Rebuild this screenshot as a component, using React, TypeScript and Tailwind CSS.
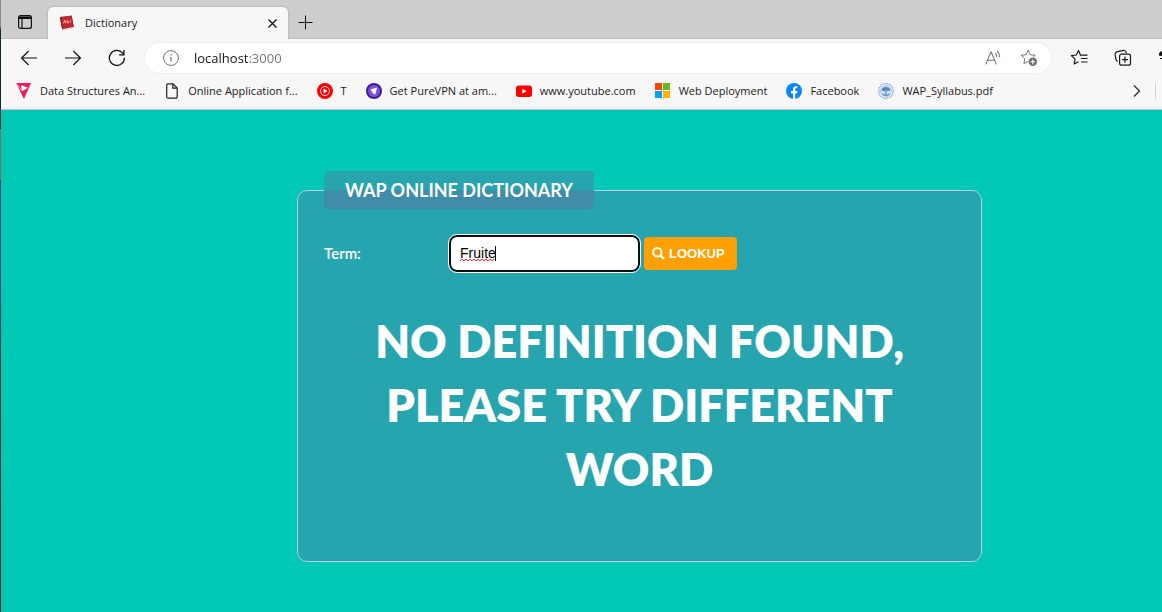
import { useState, type ReactNode } from "react";

function TabActionsIcon() {
  return (
    <svg width="16" height="16" viewBox="0 0 16 16" fill="none" stroke="#111" strokeWidth="1.2">
      <rect x="1.6" y="1.6" width="12.8" height="12.8" rx="2" />
      <path d="M2 3.2h12M2 4.2h12" strokeWidth="1.6" />
      <path d="M5 4v10" />
    </svg>
  );
}

function BookIcon() {
  return (
    <svg width="16" height="16" viewBox="0 0 16 16">
      <path d="M1 2.2 12.6 0.8 15 12.6 3.6 15.2Z" fill="#8d1519" />
      <path d="M3.4 14 14.6 11.8l.3 1.2L4 15.4Z" fill="#e3d5d0" />
      <path d="M1 2 12.6.6l2 11L3 13.6Z" fill="#c1272d" />
      <path d="m1 2 1.4-.2 2 11.6-1.4.2Z" fill="#9d1b20" />
      <path d="m4.4 8.6 1.2-3.6 1.6 3.2M5 7.3l1.6-.3M8 4.6l.5 3.5c1.6 0 1.5-2 0-1.6M12 5.6c-1.6-.2-1.6 2 0 1.6" stroke="#f0b9b5" strokeWidth=".8" fill="none" />
    </svg>
  );
}

function ArrowIcon({ forward = false }: { forward?: boolean }) {
  return (
    <svg width="18" height="16" viewBox="0 0 18 16" fill="none" stroke="#111" strokeWidth="1.2">
      {forward ? <path d="M1 8h15.4M9.4 1l7 7-7 7" /> : <path d="M17 8H1.6M8.6 1l-7 7 7 7" />}
    </svg>
  );
}

function ReloadIcon() {
  return (
    <svg width="18" height="18" viewBox="0 0 18 18" fill="none" stroke="#111" strokeWidth="1.3">
      <path d="M16.4 8.7A7.5 7.5 0 1 1 14.7 4.2L15.8 5.6" />
      <path d="M15.9 1v4.8h-4.8" />
    </svg>
  );
}

function InfoIcon() {
  return (
    <svg width="16" height="16" viewBox="0 0 16 16" fill="none" stroke="#707070">
      <circle cx="8" cy="8" r="7.4" />
      <path d="M8 7v4.6" strokeWidth="1.2" />
      <path d="M8 4.2v1.4" strokeWidth="1.4" />
    </svg>
  );
}

function ReadAloudIcon() {
  return (
    <svg width="17" height="16" viewBox="0 0 17 16" fill="none" stroke="#757575" strokeWidth="1.1">
      <path d="M.8 14.4 5.9 2h.4l5 12.4M2.6 10.2h7" />
      <path d="M10.3 3.2c1 1 1.4 2.2 1.4 3.7M12 1c1.9 1.6 2.7 3.5 2.7 5.9" />
    </svg>
  );
}

const star = "M8.2 1.2 10.3 5.7 15.2 6.3 11.6 9.7 12.5 14.6 8.2 12.2 3.9 14.6 4.8 9.7 1.2 6.3 6.1 5.7Z";

function AddFavoriteIcon() {
  return (
    <svg width="18" height="18" viewBox="0 0 18 18" fill="none">
      <path d={star} stroke="#757575" strokeLinejoin="round" />
      <circle cx="12.8" cy="12.8" r="5" fill="#fff" />
      <circle cx="12.8" cy="12.8" r="4.2" fill="#6d6d6d" />
      <path d="M12.8 10.4v4.8M10.4 12.8h4.8" stroke="#fff" strokeWidth="1.1" />
    </svg>
  );
}

function FavoritesIcon() {
  return (
    <svg width="18" height="18" viewBox="0 0 18 18" fill="none" stroke="#1b1b1b" strokeWidth="1.2">
      <path d="M17.5 6.2H10.5L8.5 1.5 6.3 6 1.5 6.7l3.6 3.4L4.2 15 8.5 12.7M11 9.5h6.5M11 13h6.5" strokeLinejoin="round" />
    </svg>
  );
}

function CollectionsIcon() {
  return (
    <svg width="18" height="18" viewBox="0 0 18 18" fill="none" stroke="#1b1b1b" strokeWidth="1.2">
      <path d="M3.8 12.5C2.6 12.2 2.2 11.5 2 10.6L1.1 5.4C.9 4 1.5 3.3 2.7 2.9L9.5 1.3c1.2-.2 2 .3 2.4 1.4l.4 1.5" />
      <rect x="5.6" y="5.2" width="10.9" height="11" rx="2" fill="#f7f7f7" />
      <path d="M11 7.6v6.2M7.9 10.7h6.2" />
    </svg>
  );
}

function VIcon() {
  return (
    <svg width="16" height="18" viewBox="0 0 16 18">
      <path d="M0 1h15L8 17Z" fill="#f5175c" />
      <path d="M5 3 12 5.8 6 9.2Z" fill="#fff" />
      <path d="M.5 1.5 6 9" stroke="#fff" strokeWidth=".7" />
    </svg>
  );
}

function PageIcon() {
  return (
    <svg width="16" height="16" viewBox="0 0 16 16" fill="none" stroke="#222" strokeWidth="1.2">
      <path d="M4.2.8h4.8l4.2 4.2v8.7a1.5 1.5 0 0 1-1.5 1.5H4.2a1.5 1.5 0 0 1-1.5-1.5V2.3A1.5 1.5 0 0 1 4.2.8ZM8.8 1v4.2H13" />
    </svg>
  );
}

function MusicIcon() {
  return (
    <svg width="16" height="16" viewBox="0 0 16 16">
      <circle cx="8" cy="8" r="8" fill="#f00" />
      <circle cx="8" cy="8" r="4.5" fill="none" stroke="#fff" strokeWidth=".9" />
      <path d="m6.5 5.5 4 2.5-4 2.5Z" fill="#fff" />
    </svg>
  );
}

function VpnIcon() {
  return (
    <svg width="16" height="16" viewBox="0 0 16 16">
      <circle cx="8" cy="8" r="8" fill="#3f1c95" />
      <circle cx="8" cy="8" r="6" fill="#7c4fe0" />
      <path d="M4.5 6.4 11.2 4.4 9.2 11.6 7.2 10.4Z" fill="#fff" />
    </svg>
  );
}

function YoutubeIcon() {
  return (
    <svg width="16" height="16" viewBox="0 0 16 16">
      <rect y="2.5" width="16" height="11.4" rx="2.6" fill="#f00" />
      <path d="m6.4 5.8 4.2 2.4-4.2 2.4Z" fill="#fff" />
    </svg>
  );
}

function WindowsIcon() {
  return (
    <svg width="16" height="16" viewBox="0 0 16 16">
      <path d="M0 0h7v7H0z" fill="#ff4409" />
      <path d="M8 0h7v7H8z" fill="#6ab820" />
      <path d="M0 8h7v7H0z" fill="#00a3f4" />
      <path d="M8 8h7v7H8z" fill="#ffb400" />
    </svg>
  );
}

function FacebookIcon() {
  return (
    <svg width="16" height="16" viewBox="0 0 16 16">
      <circle cx="8" cy="8" r="8" fill="#0b86f4" />
      <path d="M7 16V10.4H5V8h2V6.3c0-2 1.2-3.1 3-3.1.7 0 1.3.1 1.3.1v2h-.9c-1 0-1.2.6-1.2 1.2V8h2.2l-.4 2.4H9.2V16Z" fill="#fff" />
    </svg>
  );
}

function SealIcon() {
  return (
    <svg width="16" height="16" viewBox="0 0 16 16" fill="none">
      <circle cx="8" cy="8" r="7.3" stroke="#7fa9d6" strokeWidth="1.3" strokeDasharray="1.5 .8" />
      <circle cx="8" cy="8" r="5.4" fill="#cfe0f1" stroke="#8db3da" strokeWidth=".7" />
      <path d="M3.5 7C4.5 3 11.5 3 12.5 7L10 8 8 7 6 8.5Z" fill="#4f86c2" />
      <path d="M8 7v4.5M4.5 11c2 1.5 5 1.5 7 0" stroke="#4f86c2" strokeWidth="1.2" />
    </svg>
  );
}

const bookmarks: { label: string; icon: ReactNode }[] = [
  { label: "Data Structures An...", icon: <VIcon /> },
  { label: "Online Application f...", icon: <PageIcon /> },
  { label: "T", icon: <MusicIcon /> },
  { label: "Get PureVPN at am...", icon: <VpnIcon /> },
  { label: "www.youtube.com", icon: <YoutubeIcon /> },
  { label: "Web Deployment", icon: <WindowsIcon /> },
  { label: "Facebook", icon: <FacebookIcon /> },
  { label: "WAP_Syllabus.pdf", icon: <SealIcon /> },
];

function TabStrip() {
  return (
    <div className="flex h-[39px] items-end border-b border-[#bdbdbd] bg-[#cdcdcd] text-[11px]">
      <button aria-label="Tab actions" className="ml-4 mr-[15px] flex h-8 items-center">
        <TabActionsIcon />
      </button>
      <div className="-mb-px flex h-8 w-60 items-center rounded-t-[5px] bg-[#f7f7f7] pl-[11px] pr-2 shadow-[0_0_2px_rgba(0,0,0,0.3)] [clip-path:inset(-3px_-3px_0_-3px)]">
        <BookIcon />
        <span className="ml-[10px] flex-1">Dictionary</span>
        <button aria-label="Close tab" className="flex h-4 w-4 items-center justify-center">
          <svg width="9" height="9" viewBox="0 0 9 9" stroke="#111" strokeWidth="1.3">
            <path d="m.5.5 8 8M8.5.5l-8 8" />
          </svg>
        </button>
      </div>
      <button aria-label="New tab" className="ml-[10px] flex h-8 items-center">
        <svg width="15" height="15" viewBox="0 0 15 15" stroke="#111">
          <path d="M7.5.5v14M.5 7.5h14" />
        </svg>
      </button>
    </div>
  );
}

function Toolbar() {
  const [url, setUrl] = useState("localhost:3000");
  return (
    <div className="flex h-[38px] items-center">
      <div className="ml-[19px] flex shrink-0 items-center gap-[26px]">
        <button aria-label="Back"><ArrowIcon /></button>
        <button aria-label="Forward"><ArrowIcon forward /></button>
        <button aria-label="Reload"><ReloadIcon /></button>
      </div>
      <div className="ml-[19px] flex h-[30px] flex-1 items-center rounded-full bg-white pl-[18px] pr-[13px] shadow-[0_0_3px_rgba(0,0,0,0.08)]">
        <InfoIcon />
        <input
          aria-label="Address"
          value={url}
          onChange={(e) => setUrl(e.target.value)}
          className="ml-[15px] h-5 min-w-0 flex-1 bg-[linear-gradient(90deg,#111_54px,#737373_54px)] bg-clip-text text-[13px] text-transparent caret-black outline-none"
        />
        <div className="flex gap-[18px]">
          <button aria-label="Read aloud"><ReadAloudIcon /></button>
          <button aria-label="Add to favorites"><AddFavoriteIcon /></button>
        </div>
      </div>
      <div className="ml-[19px] flex shrink-0 items-center">
        <button aria-label="Favorites"><FavoritesIcon /></button>
        <button aria-label="Collections" className="ml-[26px]"><CollectionsIcon /></button>
        <button aria-label="Profile" className="ml-[26px] w-1 overflow-hidden">
          <svg width="4" height="18" viewBox="0 0 4 18">
            <path d="M4 2C1.5 3 .8 4 .8 6.5L4 7Z" fill="#111" />
            <path d="M2 9.5h2" stroke="#111" />
          </svg>
        </button>
      </div>
    </div>
  );
}

function BookmarksBar() {
  return (
    <nav aria-label="Bookmarks" className="flex h-[33px] items-center border-b border-[#c4c4c4] pb-1 pl-[15px] text-[11px]">
      <div className="flex flex-1 gap-[19px]">
        {bookmarks.map((b) => (
          <a key={b.label} href="#" className="flex items-center gap-2 whitespace-nowrap">
            {b.icon}
            {b.label}
          </a>
        ))}
      </div>
      <button aria-label="More bookmarks" className="mr-[14px]">
        <svg width="8" height="12" viewBox="0 0 8 12" fill="none" stroke="#333" strokeWidth="1.4">
          <path d="m1 .5 5.5 5.5L1 11.5" />
        </svg>
      </button>
      <span className="mr-[6px] h-4 w-px bg-[#cfcfcf]" />
    </nav>
  );
}

function DictionaryForm() {
  const [term, setTerm] = useState("Fruite");
  return (
    <form onSubmit={(e) => e.preventDefault()} className="mx-auto w-full max-w-[685px] font-['Lato',sans-serif] text-white">
      <fieldset className="rounded-[10px] border border-[#b5cdea] bg-[#7a58a3]/31 px-[26px] pb-[60px]">
        <legend className="rounded-[5px] bg-[#7a58a3]/31 px-[21px] text-lg/[38px] font-bold uppercase">
          WAP Online Dictionary
        </legend>
        <div className="mt-[26px] flex items-center">
          <label htmlFor="term" className="w-[125px] text-[15px] font-semibold">Term:</label>
          <div className="relative">
            <input
              id="term"
              value={term}
              onChange={(e) => setTerm(e.target.value)}
              className="block h-[37px] w-[191px] rounded-[8px] border-2 border-[#101010] bg-white px-[9px] pb-[2px] font-['Liberation_Sans',sans-serif] text-sm text-black outline-1 outline-white"
            />
            <svg className="pointer-events-none absolute left-[11px] top-[9px]" width="36" height="18" viewBox="0 0 36 18" fill="none">
              <path d="M0 17l2-2 2 2 2-2 2 2 2-2 2 2 2-2 2 2 2-2 2 2 2-2 2 2 2-2 2 2 2-2 2 2 2-2" stroke="#f33" />
              <path d="M35.5 2v15" stroke="#000" />
            </svg>
          </div>
          <button type="submit" className="ml-1 flex h-[33px] items-center gap-1 rounded bg-[#ffa000] pl-2 pr-3 font-['Liberation_Sans',sans-serif] text-[13px] font-bold uppercase">
            <svg width="13" height="13" viewBox="0 0 13 13" fill="none" stroke="#fff">
              <circle cx="5.3" cy="5.3" r="4.2" strokeWidth="2" />
              <path d="m8.4 8.4 3.6 3.6" strokeWidth="2.4" />
            </svg>
            Lookup
          </button>
        </div>
        <h1 className="mt-[37px] px-10 text-center text-[45px]/[64px] font-extrabold uppercase">
          No definition found, please try different word
        </h1>
      </fieldset>
    </form>
  );
}

export default function App() {
  return (
    <div className="flex min-h-screen overflow-hidden bg-[#00c8b5]">
      <div className="w-px shrink-0 bg-[linear-gradient(#8b8b8b_0_26px,#14283c_30px_129px,#8a6a60_129px_180px,#1d4b78_180px_260px,#173040_360px,#14283c_480px,#30201c_520px)]" />
      <div className="flex min-w-0 flex-1 flex-col">
        <header className="bg-[#f7f7f7] font-['Open_Sans','Noto_Sans',sans-serif] text-[#1b1b1b]">
          <TabStrip />
          <Toolbar />
          <BookmarksBar />
        </header>
        <main className="w-[110%] flex-1 pb-[49px] pt-[61px]">
          <DictionaryForm />
        </main>
      </div>
    </div>
  );
}
